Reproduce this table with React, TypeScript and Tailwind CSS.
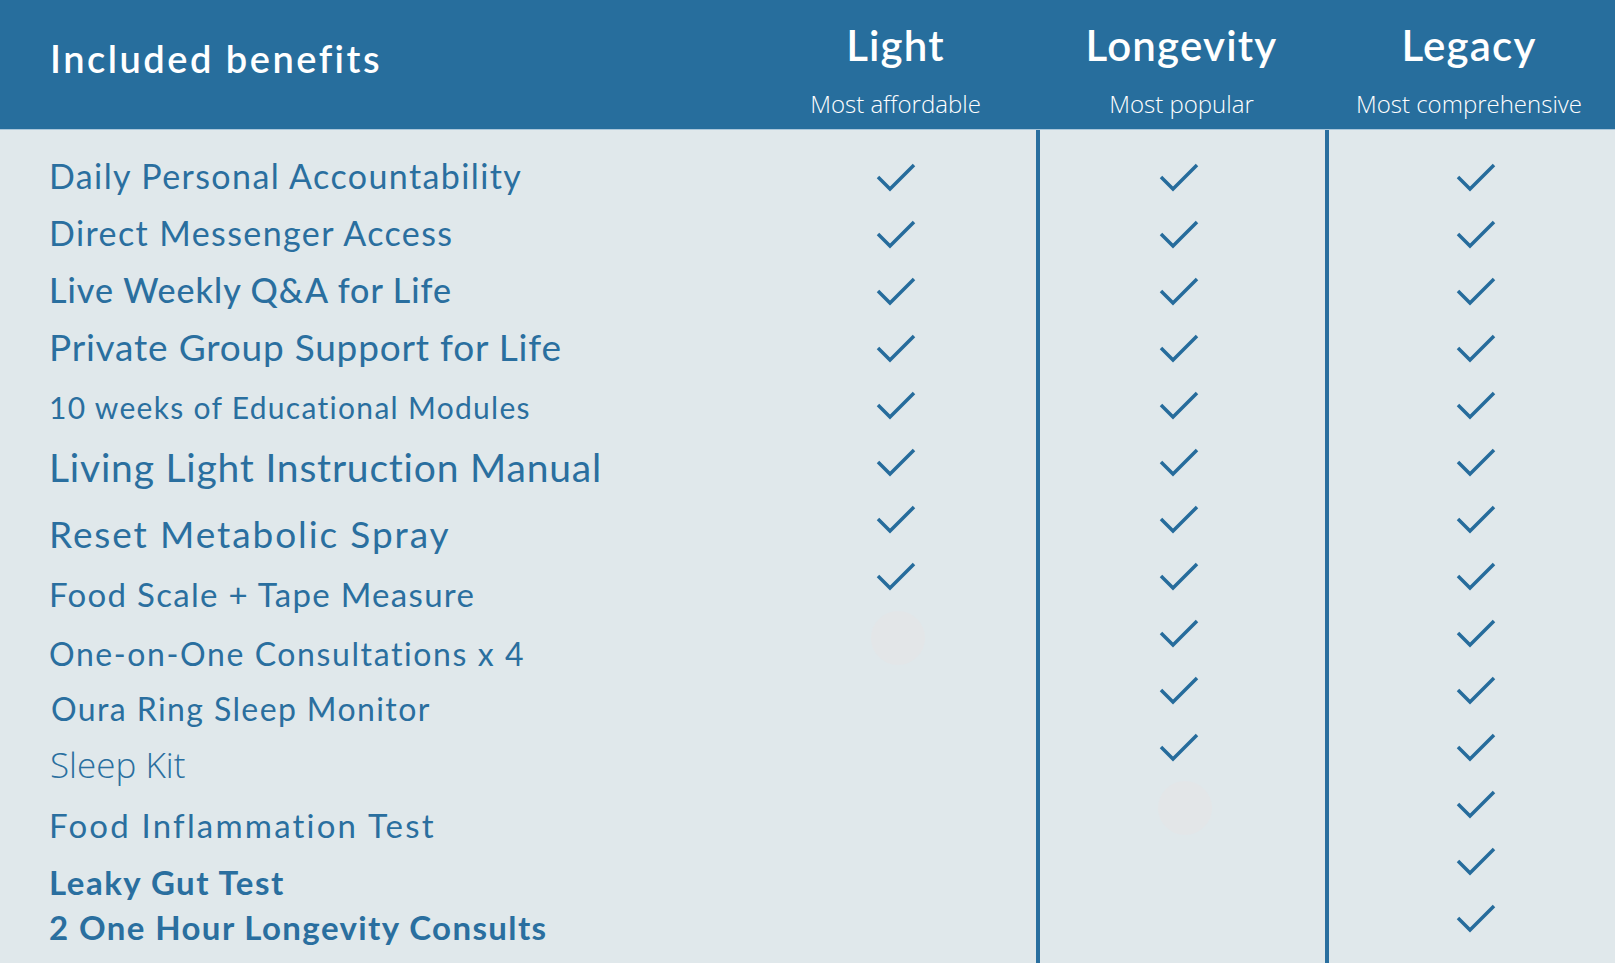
import type { ReactNode } from "react";

type Benefit = {
  label: string;
  cls: string;
};

// margin/size per row are uneven in the original chart, keep them explicit
const benefits: Benefit[] = [
  { label: "Daily Personal Accountability", cls: "mt-[26px] text-[34px] tracking-[1.4px]" },
  { label: "Direct Messenger Access", cls: "mt-[17px] text-[34px] tracking-[1.4px]" },
  { label: "Live Weekly Q&A for Life", cls: "mt-[17px] text-[34px] tracking-[1px] font-medium" },
  { label: "Private Group Support for Life", cls: "mt-[16px] text-[37px] tracking-[0.8px]" },
  { label: "10 weeks of Educational Modules", cls: "mt-[21px] text-[30px] tracking-[1.3px]" },
  { label: "Living Light Instruction Manual", cls: "mt-[20px] text-[39px] tracking-[0.8px]" },
  { label: "Reset Metabolic Spray", cls: "mt-[26px] text-[37px] tracking-[1.9px]" },
  { label: "Food Scale + Tape Measure", cls: "mt-[21px] text-[33px] tracking-[1.3px]" },
  { label: "One-on-One Consultations x 4", cls: "mt-[20px] text-[32px] tracking-[1.6px]" },
  { label: "Oura Ring Sleep Monitor", cls: "mt-[15px] text-[32px] tracking-[1.4px] pl-[2px]" },
  { label: "Sleep Kit", cls: "mt-[15px] text-[35px] font-light font-['Open_Sans',sans-serif] pl-px" },
  { label: "Food Inflammation Test", cls: "mt-[21px] text-[33px] tracking-[2.2px]" },
  { label: "Leaky Gut Test", cls: "mt-[17px] text-[33px] font-bold tracking-[1.5px]" },
  { label: "2 One Hour Longevity Consults", cls: "mt-[5px] text-[33px] font-bold tracking-[1.4px]" },
];

const plans = [
  { name: "Light", tag: "Most affordable", count: 8 },
  { name: "Longevity", tag: "Most popular", count: 11 },
  { name: "Legacy", tag: "Most comprehensive", count: 14 },
];

function Check() {
  return (
    <svg width="40" height="30" viewBox="0 0 40 30" fill="none">
      <path d="M2 15 L14 27 L38 3" stroke="#266c9c" strokeWidth="3.5" />
    </svg>
  );
}

function CheckColumn({ count, className }: { count: number; className?: string }) {
  const rows: ReactNode[] = [];
  for (let i = 0; i < 14; i++) {
    rows.push(
      <div key={i} className="h-[57px] flex items-center justify-center">
        {i < count && <Check />}
      </div>
    );
  }
  return <div className={"pt-[18px] " + (className || "")}>{rows}</div>;
}

export default function App() {
  return (
    <div className="min-h-[963px] bg-[#e0e8eb] font-['Lato',sans-serif] text-[#2a6f9f] relative overflow-hidden">
      {/* header */}
      <div className="h-[129px] bg-[#276e9d] grid grid-cols-[755px_281px_289px_1fr] text-white">
        <div className="pl-[50px] pt-[30px] text-[38px] font-semibold tracking-[2.5px]">Included benefits</div>
        {plans.map((p, i) => (
          <div
            key={p.name}
            className={
              "flex flex-col items-center pt-[18px] " +
              (i === 1 ? "pl-[2px]" : i === 2 ? "pr-[2px]" : "")
            }
          >
            <div className="text-[42px] font-semibold leading-[54px] tracking-[1.2px]">{p.name}</div>
            <div className="mt-[17px] text-[24px] font-light font-['Open_Sans',sans-serif] leading-[30px]">
              {p.tag}
            </div>
          </div>
        ))}
      </div>

      {/* body */}
      <div className="grid grid-cols-[755px_281px_289px_1fr] border-t border-[#a9c6da]">
        <div className="pl-[49px] flex flex-col">
          {benefits.map((b) => (
            <div key={b.label} className={"h-[40px] flex items-center whitespace-nowrap leading-none " + b.cls}>
              {b.label}
            </div>
          ))}
        </div>
        <CheckColumn count={plans[0].count} />
        <CheckColumn count={plans[1].count} className="border-l-4 border-[#2a6f9f] pr-[7px]" />
        <CheckColumn count={plans[2].count} className="border-l-4 border-[#2a6f9f] pl-[8px] min-h-[834px]" />
      </div>

      {/* faint smudges left in the source image */}
      <div className="absolute left-[871px] top-[611px] w-[54px] h-[54px] rounded-full bg-[#e3e6e8]" />
      <div className="absolute left-[1158px] top-[781px] w-[54px] h-[54px] rounded-full bg-[#e3e6e8]" />
    </div>
  );
}
